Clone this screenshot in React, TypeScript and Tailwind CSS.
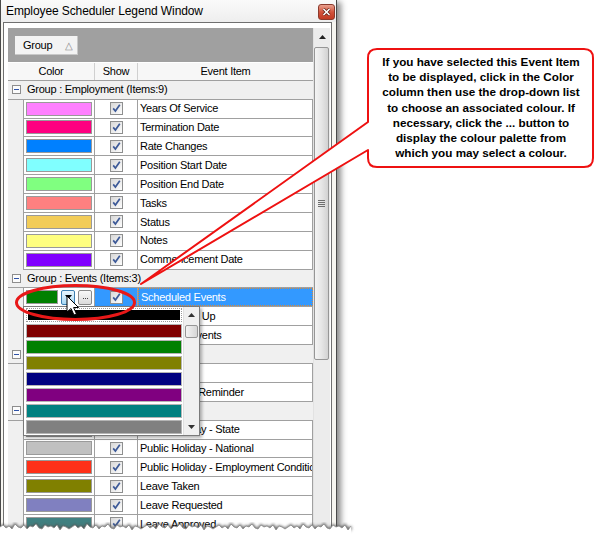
import React from "react";

const employment: [string, string][] = [
  ["#ff80ff", "Years Of Service"],
  ["#ff0080", "Termination Date"],
  ["#0080ff", "Rate Changes"],
  ["#80ffff", "Position Start Date"],
  ["#80ff80", "Position End Date"],
  ["#ff8080", "Tasks"],
  ["#f2cc58", "Status"],
  ["#ffff80", "Notes"],
  ["#8000ff", "Commencement Date"],
];

const palette = ["#000000", "#800000", "#008000", "#808000", "#000080", "#800080", "#008080", "#808080"];

function Check() {
  return (
    <svg width="13" height="13" viewBox="0 0 13 13" className="block">
      <defs>
        <linearGradient id="cbg" x1="0" y1="0" x2="1" y2="1">
          <stop offset="0" stopColor="#d6d6d6" />
          <stop offset="1" stopColor="#ffffff" />
        </linearGradient>
      </defs>
      <rect x="0.5" y="0.5" width="12" height="12" fill="url(#cbg)" stroke="#8e8f8f" />
      <path d="M3.2 6.4 L5.4 9 L9.8 2.8" fill="none" stroke="#3d5a98" strokeWidth="1.7" />
    </svg>
  );
}

function Minus() {
  return (
    <svg width="9" height="9" viewBox="0 0 9 9" className="block">
      <rect x="0.5" y="0.5" width="8" height="8" fill="#fbfbfb" stroke="#8d8d8d" />
      <path d="M2 4.5 H7" stroke="#2f52a8" strokeWidth="1" />
    </svg>
  );
}

function GroupRow({ label }: { label: string }) {
  return (
    <div className="h-[19px] flex items-center bg-[#f0f0f0] border-b border-[#a0a0a0]">
      <div className="ml-[4px]">
        <Minus />
      </div>
      <span className="ml-[6px] whitespace-nowrap">{label}</span>
    </div>
  );
}

function DataRow({ color, text }: { color: string; text: string }) {
  return (
    <div className="h-[19px] flex">
      <div className="w-[16px] shrink-0 bg-[#f0f0f0] border-r border-[#a0a0a0]" />
      <div className="flex-1 min-w-0 flex border-b border-[#a0a0a0] bg-white">
        <div className="w-[71px] shrink-0 border-r border-[#a0a0a0] flex items-center pl-[2px]">
          <div className="w-[66px] h-[14px] border border-[#9a9a9a]" style={{ background: color }} />
        </div>
        <div className="w-[43px] shrink-0 border-r border-[#a0a0a0] flex items-center justify-center">
          <Check />
        </div>
        <div className="flex-1 min-w-0 border-r border-[#a0a0a0] flex items-center pl-[2px] overflow-hidden whitespace-nowrap">
          {text}
        </div>
      </div>
    </div>
  );
}

function SelectedRow() {
  return (
    <div className="h-[19px] flex">
      <div className="w-[16px] shrink-0 bg-[#f0f0f0] border-r border-[#a0a0a0]" />
      <div className="flex-1 min-w-0 flex border-b border-[#a0a0a0] bg-white">
        <div className="w-[71px] shrink-0 border-r border-[#a0a0a0] flex items-center pl-[2px]">
          <div className="w-[32px] h-[14px] border border-[#9a9a9a] bg-[#008000]" />
          <div className="ml-[3px] w-[14px] h-[15px] rounded-[2px] border border-[#3c7fb1] bg-gradient-to-b from-[#eaf6fd] to-[#a7d9f5] flex items-center justify-center">
            <svg width="7" height="4" viewBox="0 0 7 4">
              <path d="M0 0 H7 L3.5 4 Z" fill="#000" />
            </svg>
          </div>
          <div className="ml-[3px] w-[14px] h-[15px] rounded-[2px] border border-[#8a8a8a] bg-gradient-to-b from-[#f8f8f8] to-[#dcdcdc] flex items-end justify-center gap-[1px] pb-[5px]">
            <div className="w-[1px] h-[1px] bg-[#444]" />
            <div className="w-[1px] h-[1px] bg-[#444]" />
            <div className="w-[1px] h-[1px] bg-[#444]" />
          </div>
        </div>
        <div className="w-[43px] shrink-0 border-r border-[#a0a0a0] flex items-center justify-center bg-[#3399ff]">
          <Check />
        </div>
        <div className="flex-1 min-w-0 flex items-center pl-[2px] overflow-hidden whitespace-nowrap bg-[#3399ff] text-white border border-dotted border-[#d98a3a]">
          Scheduled Events
        </div>
      </div>
    </div>
  );
}

function Grid() {
  return (
    <div className="w-[305px] shrink-0 flex flex-col text-[11px] tracking-[-0.25px] text-black">
      <div className="h-[34px] bg-[#a0a0a0] pt-[8px] pl-[7px]">
        <div className="w-[63px] h-[19px] bg-[#f3f3f3] border-b border-r border-[#c8c8c8] flex items-center pl-[8px]">
          <span>Group</span>
          <span className="ml-[13px] text-[10px] text-[#8a8a8a]">△</span>
        </div>
      </div>
      <div className="h-[1px] bg-white" />
      <div className="h-[18px] flex bg-[#f7f7f7] border-b border-[#a0a0a0]">
        <div className="w-[87px] border-r border-[#d0d0d0] flex items-center justify-center">Color</div>
        <div className="w-[43px] border-r border-[#d0d0d0] flex items-center justify-center">Show</div>
        <div className="flex-1 flex items-center justify-center">Event Item</div>
      </div>
      <GroupRow label="Group : Employment (Items:9)" />
      {employment.map(([c, t]) => (
        <DataRow key={t} color={c} text={t} />
      ))}
      <GroupRow label="Group : Events (Items:3)" />
      <SelectedRow />
      <DataRow color="#ff8000" text="Meeting Pop Up" />
      <DataRow color="#c0c0c0" text="Cancelled Events" />
      <GroupRow label="Group : Reminders (Items:2)" />
      <DataRow color="#ff80c0" text="Birthday" />
      <DataRow color="#80c0ff" text="Anniversary Reminder" />
      <GroupRow label="Group : Holidays (Items:6)" />
      <DataRow color="#ffc080" text="Public Holiday - State" />
      <DataRow color="#c0c0c0" text="Public Holiday - National" />
      <DataRow color="#ff3019" text="Public Holiday - Employment Conditions" />
      <DataRow color="#808000" text="Leave Taken" />
      <DataRow color="#8080c0" text="Leave Requested" />
      <DataRow color="#408080" text="Leave Approved" />
    </div>
  );
}

function ScrollBar() {
  return (
    <div className="w-[17px] shrink-0 bg-[#ececec] border-l border-[#e2e2e2] flex flex-col">
      <div className="h-[17px] flex items-center justify-center">
        <svg width="7" height="4" viewBox="0 0 7 4">
          <path d="M0 4 H7 L3.5 0 Z" fill="#222" />
        </svg>
      </div>
      <div className="mt-[2px] w-[15px] h-[313px] rounded-[2px] border border-[#969696] bg-gradient-to-r from-[#f4f4f4] via-[#e6e6e6] to-[#d2d2d2] flex flex-col items-center justify-center gap-[1px]">
        <div className="w-[7px] h-[1px] bg-[#6e6e6e]" />
        <div className="w-[7px] h-[1px] bg-[#6e6e6e]" />
        <div className="w-[7px] h-[1px] bg-[#6e6e6e]" />
        <div className="w-[7px] h-[1px] bg-[#6e6e6e]" />
      </div>
    </div>
  );
}

function Window() {
  return (
    <div className="flex flex-col w-[337px] h-[535px] bg-[#f7f6f1] border-l border-r border-[#4a4a4a] shadow-[4px_2px_6px_rgba(0,0,0,0.45)]">
      <div className="h-[22px] flex items-center justify-between pl-[5px] pr-[1px] bg-gradient-to-b from-[#fafafa] to-[#eeeeee]">
        <span className="text-[12px] text-black tracking-[-0.1px]">Employee Scheduler Legend Window</span>
        <div className="mt-[2px] w-[17px] h-[16px] rounded-[3px] border border-[#8b3a2c] bg-gradient-to-b from-[#e8a08f] via-[#d2533c] to-[#c23a22] flex items-center justify-center">
          <svg width="9" height="8" viewBox="0 0 9 8">
            <path d="M1.5 1 L7.5 7 M7.5 1 L1.5 7" stroke="#5a1a10" strokeWidth="3" />
            <path d="M1.5 1 L7.5 7 M7.5 1 L1.5 7" stroke="#ffffff" strokeWidth="1.6" />
          </svg>
        </div>
      </div>
      <div className="flex-1 ml-[2px] mr-[4px] border border-[#707070] bg-white pl-[4px] pt-[5px] flex overflow-hidden">
        <Grid />
        <ScrollBar />
      </div>
    </div>
  );
}

function Dropdown() {
  return (
    <div className="absolute left-[23px] top-[306px] w-[177px] h-[130px] border border-[#7a7a7a] bg-white flex shadow-[2px_2px_3px_rgba(0,0,0,0.3)]">
      <div className="w-[159px] flex flex-col pl-[2px]">
        {palette.map((c, i) => (
          <div key={c} className="h-[16px] py-[1px]">
            <div
              className={
                i === 0
                  ? "w-[156px] h-[14px] border border-dotted border-[#9a9a9a] p-[1px]"
                  : "w-[156px] h-[14px] border border-[#b4b4b4]"
              }
            >
              <div className="w-full h-full" style={{ background: c }} />
            </div>
          </div>
        ))}
      </div>
      <div className="w-[16px] bg-[#f0f0f0] border-l border-[#e0e0e0] flex flex-col">
        <div className="h-[16px] flex items-center justify-center">
          <svg width="7" height="4" viewBox="0 0 7 4">
            <path d="M0 4 H7 L3.5 0 Z" fill="#333" />
          </svg>
        </div>
        <div className="mt-[2px] ml-[1px] w-[13px] h-[13px] rounded-[2px] border border-[#969696] bg-gradient-to-r from-[#f4f4f4] to-[#d6d6d6]" />
        <div className="flex-1" />
        <div className="h-[16px] flex items-center justify-center">
          <svg width="7" height="4" viewBox="0 0 7 4">
            <path d="M0 0 H7 L3.5 4 Z" fill="#333" />
          </svg>
        </div>
      </div>
    </div>
  );
}

function tornPoints() {
  const pts: string[] = [];
  const offs = [0, -2, 1, -1, 2, -3, 0, 1, -2, 2, -1, 0, -3, 1, 2, -2, 0, -1, 1, -2, 3, -1, 0, 2];
  for (let i = 0, x = 0; x <= 352; x += 3, i++) {
    pts.push(`${x},${527 + offs[i % offs.length]}`);
  }
  return pts;
}

function Overlay() {
  const pts = tornPoints();
  return (
    <svg className="absolute left-0 top-0 pointer-events-none" width="602" height="535" viewBox="0 0 602 535">
      <defs>
        <filter id="blur" x="-10%" y="-50%" width="120%" height="200%">
          <feGaussianBlur stdDeviation="1.5" />
        </filter>
      </defs>
      <polyline points={pts.join(" ")} fill="none" stroke="#555" strokeWidth="3" filter="url(#blur)" transform="translate(0,1)" />
      <polygon points={`${pts.join(" ")} 352,540 0,540`} fill="#ffffff" />
      <polyline points={pts.join(" ")} fill="none" stroke="#8a8a8a" strokeWidth="0.8" />
      <ellipse cx="75.5" cy="302.5" rx="59" ry="17" fill="none" stroke="#e81818" strokeWidth="3" />
      <path
        d="M377 49 H584 Q593 49 593 58 V158 Q593 167 584 167 H377 Q368 167 368 158 V150 L141 284 L368 122 V58 Q368 49 377 49 Z"
        fill="#ffffff"
        stroke="#ee1111"
        strokeWidth="2"
        strokeLinejoin="round"
      />
      <g transform="translate(67,296)">
        <path d="M0 0 L0 16 L4 12.5 L7 19 L9.5 18 L6.6 11.5 L11.5 11.5 Z" fill="#ffffff" stroke="#000" strokeWidth="1" strokeLinejoin="round" />
      </g>
    </svg>
  );
}

export default function App() {
  return (
    <div className="relative w-[602px] h-[535px] overflow-hidden bg-white font-['Liberation_Sans',Arial,sans-serif]">
      <Window />
      <Dropdown />
      <Overlay />
      <div className="absolute left-[369px] top-[54px] w-[224px] text-center font-bold text-[11.7px] leading-[15.2px] text-black">
        If you have selected this Event Item
        <br />
        to be displayed, click in the Color
        <br />
        column then use the drop-down list
        <br />
        to choose an associated colour. If
        <br />
        necessary, click the ... button to
        <br />
        display the colour palette from
        <br />
        which you may select a colour.
      </div>
    </div>
  );
}
